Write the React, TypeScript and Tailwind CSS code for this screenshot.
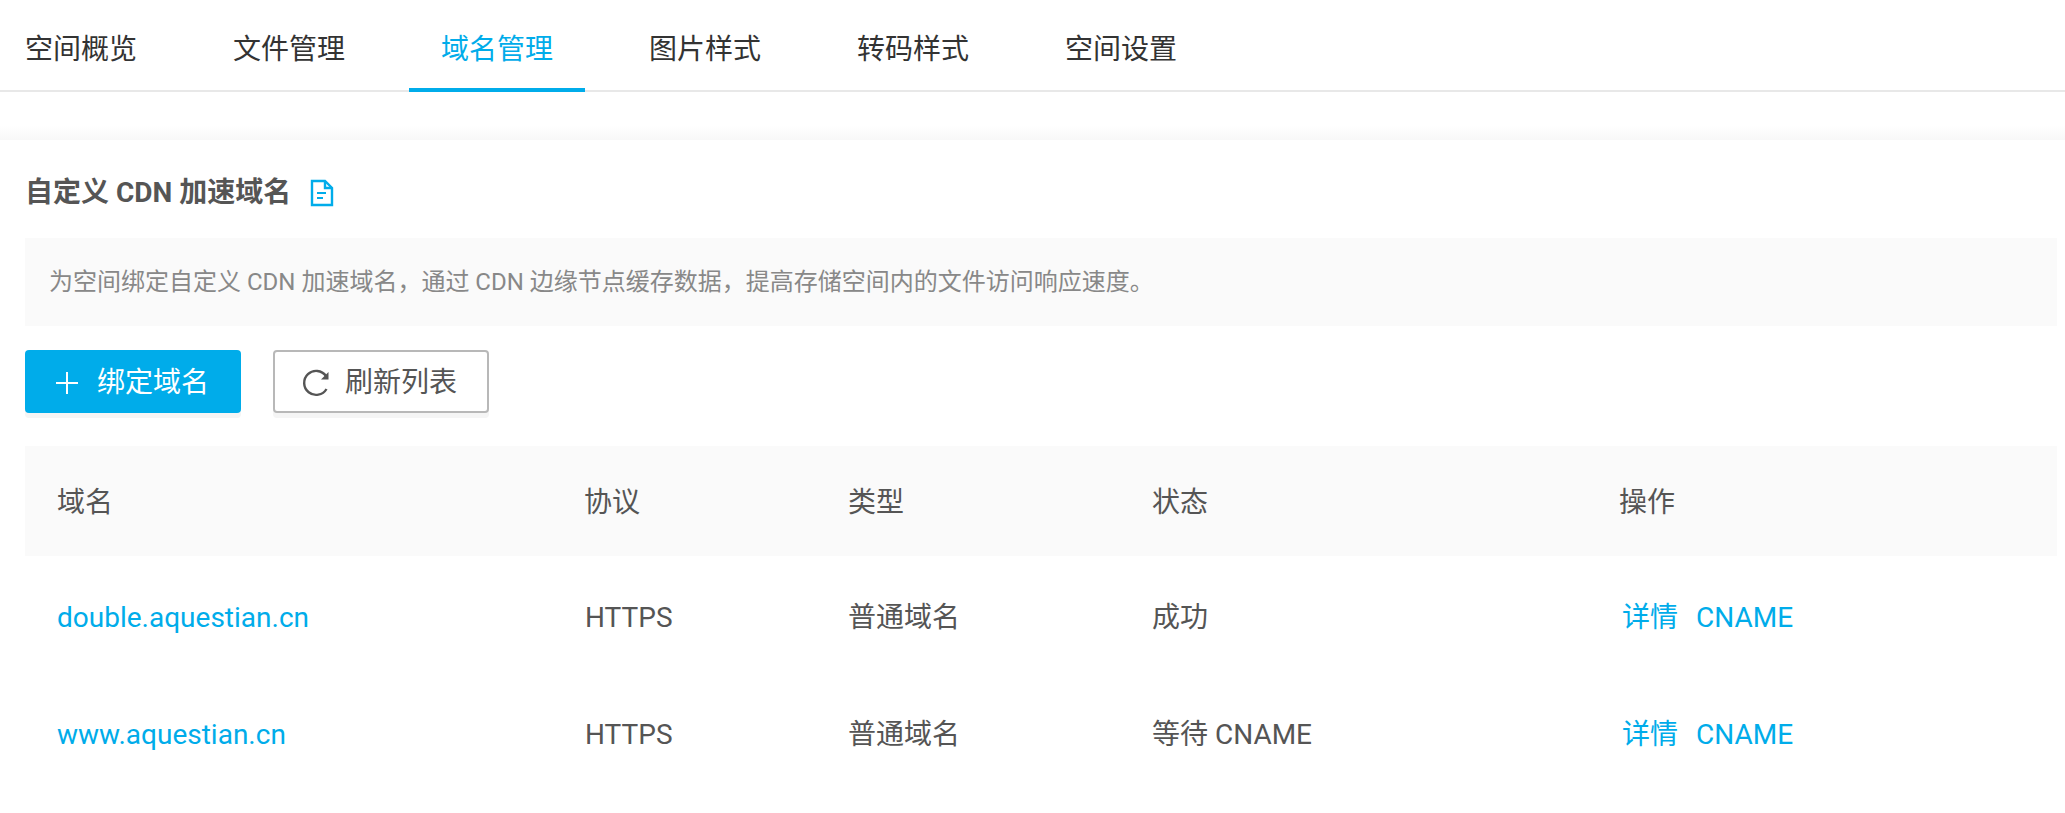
const tabs = ["空间概览", "文件管理", "域名管理", "图片样式", "转码样式", "空间设置"];

const rows = [
  { domain: "double.aquestian.cn", status: "成功" },
  { domain: "www.aquestian.cn", status: "等待 CNAME" },
];

const App = () => {
  return (
    <div className="h-[813px] overflow-hidden bg-white font-['Roboto','Noto_Sans_CJK_SC',sans-serif] text-[28px] text-[#555]">
      <div className="flex h-[92px] gap-[32px] border-b-2 border-[#e8e8e8] pl-[25px]">
        {tabs.map((tab, i) => (
          <div
            key={tab}
            className={
              i === 2
                ? "-mb-[2px] h-[92px] border-b-[4px] border-[#00acea] px-[32px] pt-[31px] leading-[38px] text-[#00acea]"
                : i === 0
                  ? "-ml-[32px] px-[32px] pt-[31px] leading-[38px] text-[#333]"
                  : "px-[32px] pt-[31px] leading-[38px] text-[#333]"
            }
          >
            {tab}
          </div>
        ))}
      </div>

      <div className="h-[48px] bg-gradient-to-b from-white from-70% to-[#f8f8f8]" />

      <div className="pr-[8px] pl-[25px]">
        <div className="mt-[38px] flex h-[30px] items-center gap-[19px]">
          <h2 className="leading-[30px] font-bold">自定义 CDN 加速域名</h2>
          <svg width="24" height="28" viewBox="0 0 24 28" fill="none" stroke="#00acea" strokeWidth="2.4">
            <path d="M2 2h13l7 7v17H2z" />
            <path d="M15 2v7h7" />
            <path d="M7 14h9M7 19h6" strokeWidth="2" />
          </svg>
        </div>

        <div className="mt-[30px] flex h-[88px] items-center bg-[#fafafa] px-[24px] text-[24px] text-[#888]">
          为空间绑定自定义 CDN 加速域名，通过 CDN 边缘节点缓存数据，提高存储空间内的文件访问响应速度。
        </div>

        <div className="mt-[24px] flex gap-[32px]">
          <button className="flex h-[63px] w-[216px] items-center gap-[19px] rounded-[4px] bg-[#00acea] pt-[3px] pl-[31px] text-white shadow-[0_5px_0_#f5f5f5]">
            <svg width="22" height="22" viewBox="0 0 22 22" stroke="#fff" strokeWidth="2">
              <path d="M11 0v22M0 11h22" />
            </svg>
            绑定域名
          </button>
          <button className="flex h-[63px] w-[216px] items-center gap-[15px] rounded-[4px] border-2 border-[#b8b8b8] bg-white pt-[2px] pl-[27px] shadow-[0_5px_0_#f5f5f5]">
            <svg width="28" height="28" viewBox="0 0 28 28" fill="none" stroke="#555" strokeWidth="2.4">
              <path d="M24.5 20A12 12 0 1 1 24 7" />
              <path d="M26.5 3v7.5H19z" fill="#555" stroke="none" />
            </svg>
            刷新列表
          </button>
        </div>

        <div className="mt-[33px] flex h-[110px] items-center bg-[#fafafa] pt-[3px]">
          <div className="w-[559px] pl-[32px]">域名</div>
          <div className="w-[264px]">协议</div>
          <div className="w-[304px]">类型</div>
          <div className="w-[467px]">状态</div>
          <div>操作</div>
        </div>

        {rows.map((row) => (
          <div key={row.domain} className="flex h-[117px] items-center pt-[6px]">
            <div className="w-[560px] pl-[32px] text-[#00acea]">{row.domain}</div>
            <div className="w-[263px]">HTTPS</div>
            <div className="w-[304px]">普通域名</div>
            <div className="w-[468px]">{row.status}</div>
            <div className="flex gap-[18px] pl-[2px] text-[#00acea]">
              <span>详情</span>
              <span>CNAME</span>
            </div>
          </div>
        ))}
      </div>
    </div>
  );
};

export default App;
